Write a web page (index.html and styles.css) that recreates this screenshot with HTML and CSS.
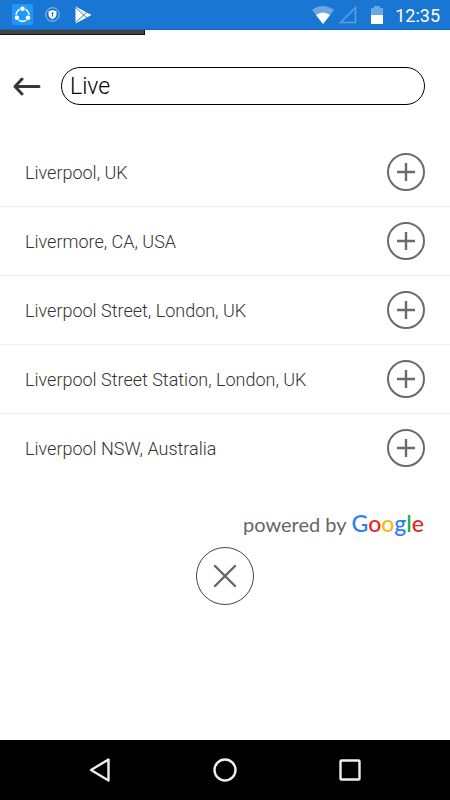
FILE: index.html
```html
<!DOCTYPE html>
<html lang="en">
<head>
<meta charset="utf-8">
<meta name="viewport" content="width=device-width, initial-scale=1">
<title>Place search</title>
<link rel="stylesheet" href="styles.css">
</head>
<body>
<header class="status">
  <div class="status-group">
    <svg class="app-share" width="21" height="21" viewBox="0 0 21 21" aria-hidden="true">
      <rect width="21" height="21" rx="2" fill="#2196fb"/>
      <circle cx="10.500" cy="11" r="6.400" fill="none" stroke="#fff" stroke-width="1.600"/>
      <circle cx="10.500" cy="4.800" r="3" fill="#2196fb"/><circle cx="5" cy="13.800" r="3" fill="#2196fb"/><circle cx="16" cy="13.800" r="3" fill="#2196fb"/>
      <circle cx="10.500" cy="4.800" r="2.300" fill="#fff"/><circle cx="5" cy="13.800" r="2.300" fill="#fff"/><circle cx="16" cy="13.800" r="2.300" fill="#fff"/>
    </svg>
    <svg class="app-shield" width="15" height="15" viewBox="0 0 15 15" aria-hidden="true">
      <circle cx="7.500" cy="7.500" r="6.800" fill="none" stroke="#9cc4ee"/>
      <path d="M7.500 3 L11.500 4.200 V7 C11.500 9.500 9.900 11.200 7.500 12.300 C5.100 11.200 3.500 9.500 3.500 7 V4.200 Z" fill="#fff"/>
      <path d="M7.500 6.500 V9.500" stroke="#1976d2"/><circle cx="7.500" cy="6.200" r="1" fill="#1976d2"/>
    </svg>
    <svg width="17" height="18" viewBox="0 0 17 18" aria-hidden="true">
      <path d="M0.500 0.500 L16.500 9 L0.500 17.500 Z" fill="#fff"/>
      <path d="M0 1 L12.500 12.500 M0 17 L12.500 5.500" stroke="#1976d2" stroke-width="0.900"/>
    </svg>
  </div>
  <div class="status-group">
    <svg width="22" height="18" viewBox="0 0 22 18" aria-hidden="true">
      <path d="M0 4 Q11 -4 22 4 L11 18 Z" fill="#6aa7e3"/>
      <path d="M4 9 Q11 4 18 9 L11 18 Z" fill="#fff"/>
    </svg>
    <svg class="signal" width="18" height="18" viewBox="0 0 18 18" aria-hidden="true">
      <path d="M1.500 16.500 L16.500 1.500 V16.500 Z" fill="none" stroke="#5f9fdf" stroke-width="1.500"/>
    </svg>
    <svg class="battery" width="12" height="18" viewBox="0 0 12 18" aria-hidden="true">
      <path d="M3 0 H9 V2 H12 V9 H0 V2 H3 Z" fill="#6aa7e3"/><path d="M0 9 H12 V18 H0 Z" fill="#fff"/>
    </svg>
    <time class="clock">12:35</time>
  </div>
</header>
<main class="page">
  <div class="progress"></div>
  <form class="search">
    <button class="back" type="button" aria-label="Back">
      <svg width="28" height="19" viewBox="0 0 28 19" aria-hidden="true"><path d="M9 2 L2 9.500 L9 17 M2 9.500 H26" fill="none" stroke="#383838" stroke-width="3" stroke-linecap="round" stroke-linejoin="round"/></svg>
    </button>
    <input class="query" type="text" aria-label="Search places" value="Live">
  </form>
  <ul class="places">
    <li class="place"><span>Liverpool, UK</span><button class="add" type="button" aria-label="Add Liverpool, UK"><svg width="18" height="18" viewBox="0 0 18 18"><path d="M9 0 V18 M0 9 H18"/></svg></button></li>
    <li class="place"><span>Livermore, CA, USA</span><button class="add" type="button" aria-label="Add Livermore, CA, USA"><svg width="18" height="18" viewBox="0 0 18 18"><path d="M9 0 V18 M0 9 H18"/></svg></button></li>
    <li class="place"><span>Liverpool Street, London, UK</span><button class="add" type="button" aria-label="Add Liverpool Street, London, UK"><svg width="18" height="18" viewBox="0 0 18 18"><path d="M9 0 V18 M0 9 H18"/></svg></button></li>
    <li class="place"><span>Liverpool Street Station, London, UK</span><button class="add" type="button" aria-label="Add Liverpool Street Station, London, UK"><svg width="18" height="18" viewBox="0 0 18 18"><path d="M9 0 V18 M0 9 H18"/></svg></button></li>
    <li class="place"><span>Liverpool NSW, Australia</span><button class="add" type="button" aria-label="Add Liverpool NSW, Australia"><svg width="18" height="18" viewBox="0 0 18 18"><path d="M9 0 V18 M0 9 H18"/></svg></button></li>
  </ul>
  <p class="credit"><span>powered by</span><span class="google"><span class="blue">G</span><span class="red">o</span><span class="yellow">o</span><span class="blue">g</span><span class="green">l</span><span class="red">e</span></span></p>
  <button class="close" type="button" aria-label="Close">
    <svg width="24" height="24" viewBox="0 0 24 24" aria-hidden="true"><path d="M2 2 L22 22 M22 2 L2 22" fill="none" stroke="#666" stroke-width="2.400" stroke-linecap="round"/></svg>
  </button>
</main>
<nav class="system">
  <button type="button" aria-label="Back"><svg width="24" height="26" viewBox="0 0 24 26"><path d="M20.500 2.500 V23.500 L3 13 Z"/></svg></button>
  <button type="button" aria-label="Home"><svg width="24" height="26" viewBox="0 0 24 26"><circle cx="12" cy="13" r="10.500"/></svg></button>
  <button type="button" aria-label="Recent apps"><svg width="24" height="26" viewBox="0 0 24 26"><rect x="2.500" y="3.500" width="19" height="19" rx="1"/></svg></button>
</nav>
</body>
</html>
```
FILE: styles.css
```css
* {
  box-sizing: border-box;
}

body {
  display: flex;
  flex-direction: column;
  min-height: 100vh;
  margin: 0;
  background: #fff;
  color: #333;
  font-family: Roboto, sans-serif;
}

button {
  display: flex;
  align-items: center;
  justify-content: center;
  padding: 0;
  border: 0;
  background: none;
}

svg {
  display: block;
}

.status {
  display: flex;
  align-items: center;
  justify-content: space-between;
  height: 30px;
  padding: 0 10px 0 12px;
  border-bottom: 1px solid #1565c0;
  background: #1976d2;
}

.status-group {
  display: flex;
  align-items: center;
}

.app-share {
  margin-right: 12px;
}

.app-shield {
  margin-right: 15px;
}

.signal {
  margin-left: 5px;
}

.battery {
  margin: 0 12px 0 14px;
}

.clock {
  padding-top: 2px;
  color: #fff;
  font-size: 18px;
  font-weight: 400;
  line-height: 24px;
}

.page {
  display: flex;
  flex: 1;
  flex-direction: column;
}

.progress {
  width: 145px;
  max-width: 100%;
  height: 5px;
  border: solid #111;
  border-width: 0 1px 1px 0;
  background: #444;
}

.search {
  display: flex;
  align-items: center;
  gap: 20px;
  margin: 32px 25px 0 13px;
}

.query {
  flex: 1;
  min-width: 0;
  height: 38px;
  padding: 0 8px;
  border: 1px solid #000;
  border-radius: 19px;
  outline: 0;
  background: #fff;
  color: #000;
  font-family: inherit;
  font-size: 23px;
  font-weight: 300;
}

.places {
  margin: 33px 0 0;
  padding: 0;
  list-style: none;
}

.place {
  display: flex;
  align-items: center;
  justify-content: space-between;
  height: 69px;
  padding: 0 25px;
  border-bottom: 1px solid #eee;
  font-size: 18px;
  font-weight: 300;
}

.place:last-child {
  border-bottom-color: transparent;
}

.add {
  flex: none;
  width: 38px;
  height: 38px;
  border: 2px solid #6a6a6a;
  border-radius: 50%;
}

.add path {
  fill: none;
  stroke: #6a6a6a;
  stroke-width: 2.400;
}

.credit {
  display: flex;
  align-items: baseline;
  justify-content: flex-end;
  gap: 5px;
  margin: 26px 26px 0;
  color: #666;
  font-family: Lato, sans-serif;
  font-size: 20px;
  line-height: 28px;
}

.google {
  font-size: 23px;
  font-weight: 500;
}

.blue {
  color: #2a80f5;
}

.red {
  color: #ea2419;
}

.yellow {
  color: #fbb70b;
}

.green {
  color: #21a84a;
}

.close {
  align-self: center;
  width: 58px;
  height: 58px;
  margin-top: 9px;
  border: 1px solid #444;
  border-radius: 50%;
}

.system {
  display: flex;
  justify-content: center;
  gap: 101px;
  padding: 17px 0;
  background: #000;
}

.system svg {
  fill: none;
  stroke: #eee;
  stroke-width: 2.400;
  stroke-linejoin: round;
}
```
